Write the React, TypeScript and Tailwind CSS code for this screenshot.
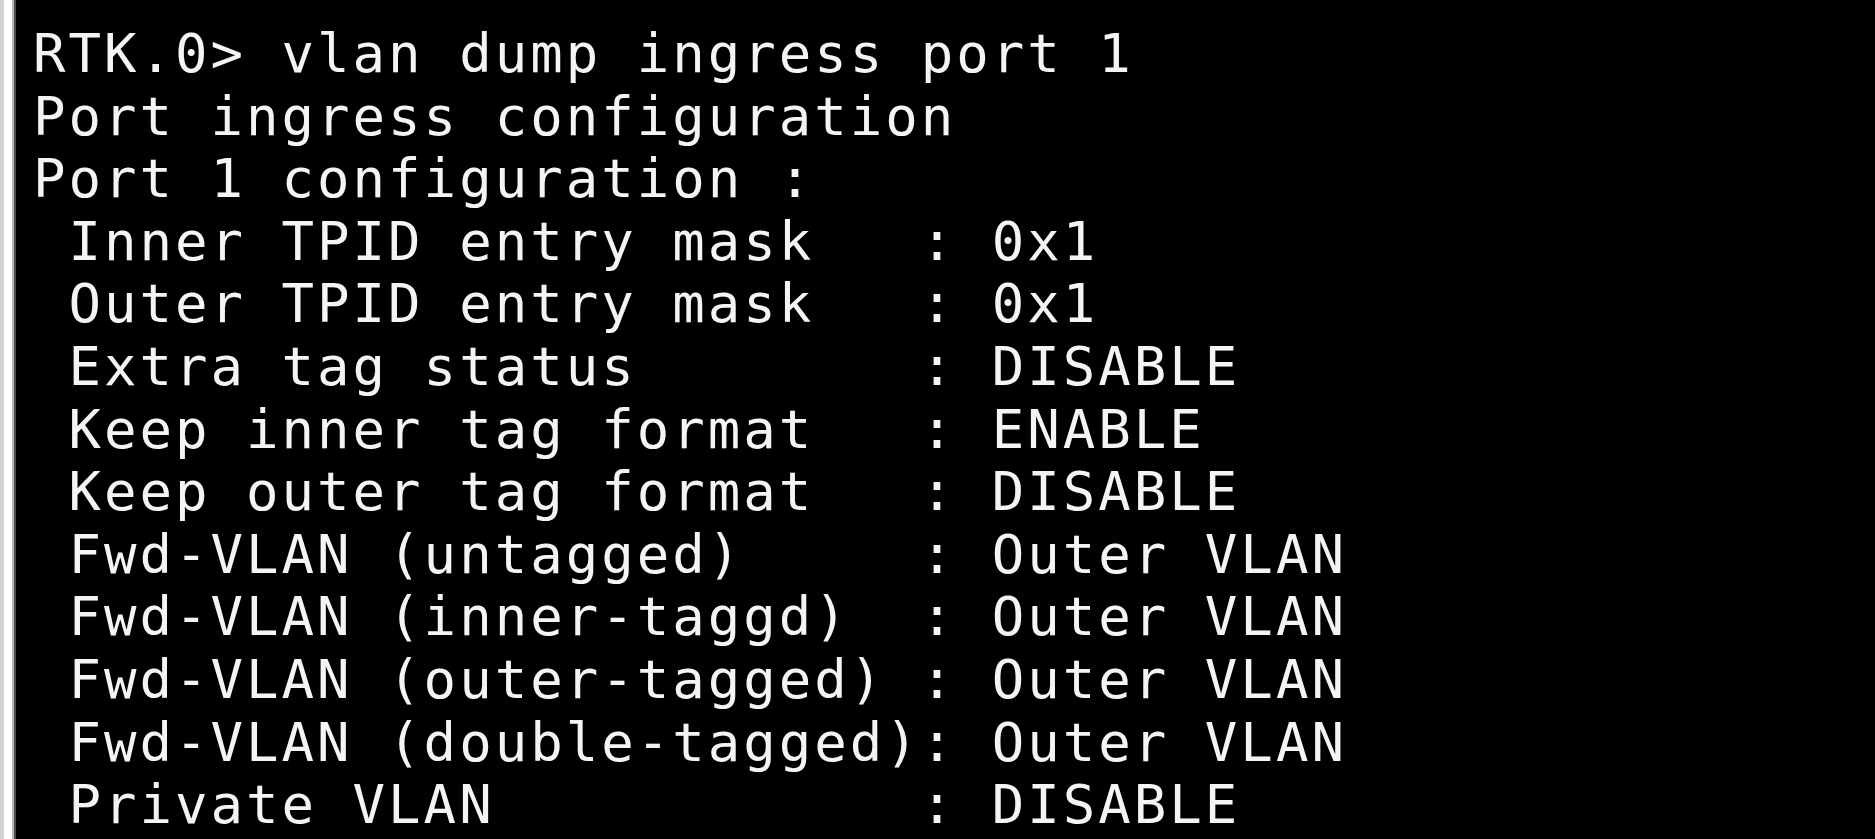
import React from "react";

const lines = [
  "RTK.0> vlan dump ingress port 1",
  "Port ingress configuration",
  "Port 1 configuration :",
  " Inner TPID entry mask   : 0x1",
  " Outer TPID entry mask   : 0x1",
  " Extra tag status        : DISABLE",
  " Keep inner tag format   : ENABLE",
  " Keep outer tag format   : DISABLE",
  " Fwd-VLAN (untagged)     : Outer VLAN",
  " Fwd-VLAN (inner-taggd)  : Outer VLAN",
  " Fwd-VLAN (outer-tagged) : Outer VLAN",
  " Fwd-VLAN (double-tagged): Outer VLAN",
  " Private VLAN            : DISABLE",
];

export default function App() {
  return (
    <div className="flex h-[839px] w-[1875px] overflow-hidden bg-black">
      <div className="w-[4px] shrink-0 bg-[#d2d2d2]" />
      <div className="w-[8px] shrink-0 bg-white" />
      <div className="w-[2px] shrink-0 bg-[#b8b8b8]" />
      <div className="w-[2px] shrink-0 bg-[#4a4a4a]" />
      <div
        className="flex-1 pl-[17px] pt-[23px] text-[54px] leading-[62.6px] tracking-[3px] text-[#f4f4f4] whitespace-pre"
        style={{ fontFamily: '"DejaVu Sans Mono", monospace' }}
      >
        {lines.map((l, i) => (
          <div key={i}>{l}</div>
        ))}
      </div>
    </div>
  );
}
